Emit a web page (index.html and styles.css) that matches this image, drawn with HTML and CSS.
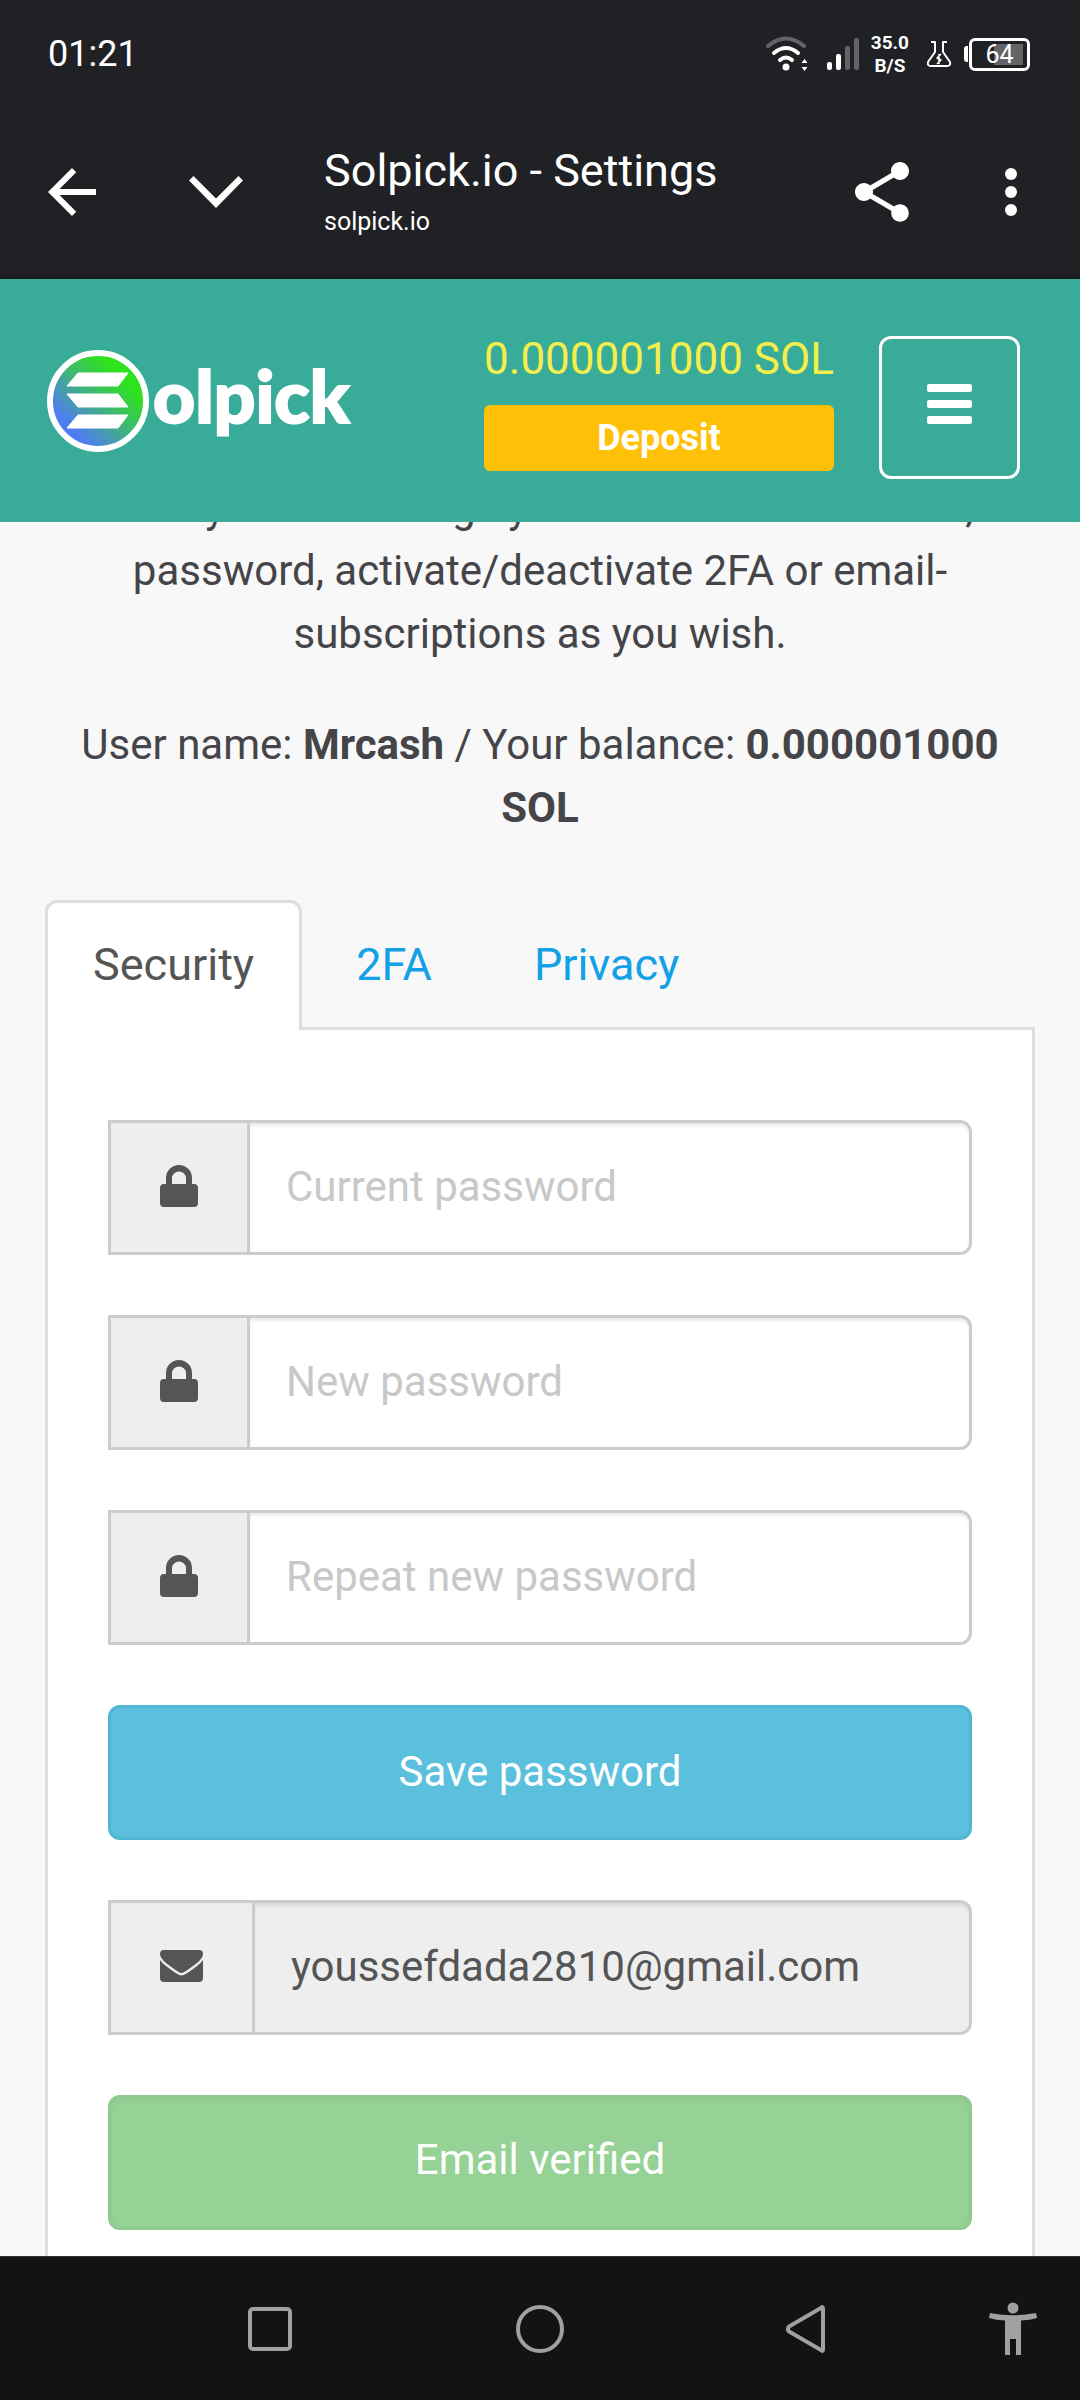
FILE: index.html
```html
<!DOCTYPE html>
<html lang="en">
<head>
<meta charset="utf-8">
<meta name="viewport" content="width=device-width, initial-scale=1">
<title>Solpick.io - Settings</title>
<link rel="stylesheet" href="styles.css">
</head>
<body>
<div class="status-bar">
  <span class="clock">01:21</span>
  <div class="status-icons">
    <svg class="wifi" width="44" height="36" viewBox="0 0 44 36" fill="none" stroke-linecap="round">
      <path d="M3 10Q21 -5 39 10" stroke="#636466" stroke-width="4"/>
      <path d="M9 17Q21 7 33 17" stroke="#fff" stroke-width="4"/>
      <path d="M15 24Q21 19 27 24" stroke="#fff" stroke-width="4"/>
      <circle cx="21" cy="31" r="3.5" fill="#fff"/>
      <path d="M36.500 27l3-4 3 4zM36.500 31l3 4 3-4z" fill="#fff"/>
    </svg>
    <svg class="signal" width="32" height="32" viewBox="0 0 32 32">
      <rect x="0" y="24" width="5" height="8" rx="2" fill="#fff"/>
      <rect x="9" y="16" width="5" height="16" rx="2" fill="#fff"/>
      <rect x="18" y="8" width="5" height="24" rx="2" fill="#636466"/>
      <rect x="27" y="0" width="5" height="32" rx="2" fill="#636466"/>
    </svg>
    <div class="speed"><span>35.0</span><span>B/S</span></div>
    <svg class="flask" width="26" height="28" viewBox="0 0 26 28" fill="none" stroke="#fff" stroke-width="2" stroke-linejoin="round">
      <path d="M5 2h4v10L2 22q-1 4 3 4h16q4 0 3-4L17 12V2h4"/>
      <path d="M15 14l-4 4 4 2-4 4M13 14v10" stroke-width="1.500"/>
    </svg>
    <div class="battery"><span class="battery-tip"></span><span class="battery-body">64</span></div>
  </div>
</div>

<div class="toolbar">
  <button class="tool" aria-label="Back"><svg width="72" height="72" viewBox="0 0 24 24"><path d="M20 11H7.830l5.590-5.590L12 4l-8 8 8 8 1.410-1.410L7.830 13H20z"/></svg></button>
  <button class="tool" aria-label="Minimise"><svg width="72" height="72" viewBox="0 0 72 72"><path d="M9 24.500L13.500 20 36 42.500 58.500 20 63 24.500 36 52z"/></svg></button>
  <div class="page-id">
    <span class="page-title">Solpick.io - Settings</span>
    <span class="page-host">solpick.io</span>
  </div>
  <button class="tool" aria-label="Share"><svg width="72" height="72" viewBox="0 0 24 24"><path d="M18 16.080c-.76 0-1.440.3-1.960.77L8.910 12.700c.05-.23.09-.46.09-.7s-.04-.47-.09-.7l7.050-4.110c.54.5 1.250.81 2.040.81 1.660 0 3-1.340 3-3s-1.340-3-3-3-3 1.340-3 3c0 .24.04.47.09.7L8.040 9.810C7.500 9.310 6.790 9 6 9c-1.660 0-3 1.340-3 3s1.340 3 3 3c.79 0 1.500-.31 2.040-.81l7.120 4.160c-.05.21-.08.43-.08.65 0 1.610 1.310 2.920 2.920 2.920s2.920-1.310 2.920-2.920-1.310-2.920-2.920-2.920z"/></svg></button>
  <button class="tool" aria-label="More"><svg width="72" height="72" viewBox="0 0 24 24"><circle cx="12" cy="6" r="2"/><circle cx="12" cy="12" r="2"/><circle cx="12" cy="18" r="2"/></svg></button>
</div>

<header class="site-header">
  <a class="logo" href="#" aria-label="Solpick">
    <svg width="102" height="102" viewBox="0 0 102 102">
      <defs><linearGradient id="coin" x1="0.150" y1="0.850" x2="0.850" y2="0.150">
        <stop offset="0.100" stop-color="#4f7cf0"/><stop offset="0.500" stop-color="#3fb578"/><stop offset="0.850" stop-color="#2fe31c"/>
      </linearGradient></defs>
      <circle cx="51" cy="51" r="48" fill="url(#coin)" stroke="#fff" stroke-width="6"/>
      <g fill="#fff" stroke="#fff" stroke-width="1" stroke-linejoin="round">
        <path d="M31 23h50l-10 13H20z"/><path d="M20 44h51l10 13H31z"/><path d="M31 65h50l-10 13H20z"/>
      </g>
    </svg>
    <span class="wordmark">olpick</span>
  </a>
  <div class="wallet">
    <span class="wallet-balance">0.000001000 SOL</span>
    <button class="deposit">Deposit</button>
  </div>
  <button class="menu" aria-label="Menu"><span></span><span></span><span></span></button>
</header>

<main class="content">
  <p class="intro">Here you can change your user e-mail address, password, activate/deactivate 2FA or email-subscriptions as you wish.</p>
  <p class="intro">User name: <b>Mrcash</b> / Your balance: <b>0.000001000 SOL</b></p>

  <nav class="tabs">
    <a class="tab active" href="#security">Security</a>
    <a class="tab" href="#2fa">2FA</a>
    <a class="tab" href="#privacy">Privacy</a>
  </nav>

  <form class="panel" id="security">
    <div class="field">
      <label class="addon" for="current" aria-label="Current password"><svg width="40" height="42" viewBox="0 0 40 42"><path d="M7 19v-6a13 13 0 0 1 26 0v6h2q4 0 4 4v15q0 4-4 4H5q-4 0-4-4V23q0-4 4-4zM13 19h14v-6a7 6.500 0 0 0-14 0z"/></svg></label>
      <input id="current" type="password" placeholder="Current password">
    </div>
    <div class="field">
      <label class="addon" for="new" aria-label="New password"><svg width="40" height="42" viewBox="0 0 40 42"><path d="M7 19v-6a13 13 0 0 1 26 0v6h2q4 0 4 4v15q0 4-4 4H5q-4 0-4-4V23q0-4 4-4zM13 19h14v-6a7 6.500 0 0 0-14 0z"/></svg></label>
      <input id="new" type="password" placeholder="New password">
    </div>
    <div class="field">
      <label class="addon" for="repeat" aria-label="Repeat new password"><svg width="40" height="42" viewBox="0 0 40 42"><path d="M7 19v-6a13 13 0 0 1 26 0v6h2q4 0 4 4v15q0 4-4 4H5q-4 0-4-4V23q0-4 4-4zM13 19h14v-6a7 6.500 0 0 0-14 0z"/></svg></label>
      <input id="repeat" type="password" placeholder="Repeat new password">
    </div>
    <button class="btn btn-save" type="button">Save password</button>
    <div class="field">
      <label class="addon" for="email" aria-label="Email"><svg width="45" height="34" viewBox="0 0 45 34"><path d="M1 5q0-4 4-4h35q4 0 4 4 0 4-6 9-13 10-15.500 10T7 14Q1 9 1 5zM1 11q2 3 6 6 12 9.500 15.500 9.500T38 17q4-3 6-6v18q0 4-4 4H5q-4 0-4-4z"/></svg></label>
      <input id="email" type="email" value="youssefdada2810@gmail.com" disabled>
    </div>
    <button class="btn btn-verified" type="button" disabled>Email verified</button>
  </form>
</main>

<div class="nav-bar">
  <button class="nav-key nav-recent" aria-label="Recent apps"><svg width="48" height="52" viewBox="0 0 48 52"><rect x="4" y="6" width="40" height="40" rx="3"/></svg></button>
  <button class="nav-key" aria-label="Home"><svg width="48" height="52" viewBox="0 0 48 52"><circle cx="24" cy="26" r="22"/></svg></button>
  <button class="nav-key" aria-label="Back"><svg width="48" height="52" viewBox="0 0 48 52"><path d="M37 5.500v41Q37 49 35 47L3 28.500Q1 26 3 23.500L35 5Q37 3 37 5.500z"/></svg></button>
  <button class="nav-key nav-access" aria-label="Accessibility"><svg width="48" height="54" viewBox="0 0 48 54"><circle cx="24" cy="6" r="5.500"/><path d="M1 11q23 4.500 46 0l1 5q-7 2-16 2.500V53h-5V37h-6v16h-5V18.500Q7 18 0 16z"/></svg></button>
</div>
</body>
</html>
```
FILE: styles.css
```css
* { box-sizing: border-box; }

body {
  margin: 0;
  height: 100vh;
  display: flex;
  flex-direction: column;
  overflow: hidden;
  background: #f8f8f8;
  color: #454549;
  font-family: Roboto, "Liberation Sans", sans-serif;
  font-size: 42px;
  line-height: 63px;
}

button, input { font: inherit; }
button { border: 0; padding: 0; background: none; }
a { text-decoration: none; }
svg { display: block; }

/* Phone status bar */
.status-bar {
  flex: none;
  display: flex;
  align-items: center;
  justify-content: space-between;
  height: 108px;
  padding: 0 50px 0 48px;
  background: #202124;
  color: #fff;
}
.clock { font-size: 36px; line-height: 42px; }
.status-icons { display: flex; align-items: center; }
.signal { margin-left: 18px; }
.speed {
  display: flex;
  flex-direction: column;
  margin-left: 12px;
  font-size: 19px;
  font-weight: 700;
  line-height: 23px;
  text-align: center;
}
.flask { margin-left: 17px; }
.battery { display: flex; align-items: center; margin-left: 12px; }
.battery-tip { width: 4px; height: 16px; border-radius: 3px 0 0 3px; background: #fff; }
.battery-body {
  width: 61px;
  height: 33px;
  margin-left: 1px;
  border: 3px solid #fff;
  border-radius: 6px;
  background: linear-gradient(#636466, #636466) 22px 3px / 29px 21px no-repeat;
  font-size: 25px;
  line-height: 27px;
  text-align: center;
}

/* Browser toolbar */
.toolbar {
  flex: none;
  display: flex;
  align-items: center;
  height: 171px;
  padding: 0 33px 0 36px;
  border-bottom: 3px solid #17201f;
  background: #202124;
  color: #fff;
}
.tool { width: 72px; height: 72px; }
.tool svg { fill: #fff; }
.tool + .tool { margin-left: 72px; }
.page-id + .tool + .tool { margin-left: 57px; }
.page-id { flex: 1; display: flex; flex-direction: column; margin-left: 72px; }
.page-title { font-size: 45px; line-height: 60px; }
.page-host { font-size: 25px; line-height: 42px; }

/* Site header */
.site-header {
  flex: none;
  position: relative;
  z-index: 1;
  display: flex;
  align-items: flex-start;
  padding: 57px 60px 43px 47px;
  background: #38ac98;
  color: #fff;
}
.logo { display: flex; align-items: center; height: 130px; color: #fff; }
.wordmark {
  margin-left: 4px;
  padding-bottom: 12px;
  font-family: Lato, "Liberation Sans", sans-serif;
  font-size: 73px;
  font-weight: 900;
  line-height: 84px;
  -webkit-text-stroke: 2px #fff;
}
.wallet { display: flex; flex-direction: column; gap: 23px; width: 350px; margin-left: auto; }
.wallet-balance {
  color: #f3ee4c;
  font-size: 44px;
  line-height: 46px;
  text-align: center;
  white-space: nowrap;
}
.deposit {
  height: 66px;
  border-radius: 6px;
  background: #ffc107;
  color: #fff;
  font-size: 36px;
  font-weight: 700;
  line-height: 66px;
}
.menu {
  display: flex;
  flex-direction: column;
  align-items: center;
  justify-content: center;
  gap: 8px;
  width: 141px;
  height: 143px;
  margin-left: 45px;
  padding-bottom: 8px;
  border: 3px solid #fff;
  border-radius: 12px;
}
.menu span { width: 45px; height: 8px; border-radius: 2px; background: #fff; }

/* Settings page, scrolled so that its first line is behind the header */
.content {
  flex: 1;
  min-height: 0;
  margin-top: -46px;
  padding: 0 45px;
  overflow: hidden;
}
.intro { margin: 0 0 48px; padding: 0 30px; text-align: center; }

.tabs {
  display: flex;
  gap: 6px;
  margin-top: 61px;
  border-bottom: 3px solid #ddd;
  font-size: 45px;
  line-height: 64px;
}
.tab {
  margin-bottom: -3px;
  padding: 30px 45px 33px;
  border: 3px solid transparent;
  border-bottom: 0;
  border-radius: 12px 12px 0 0;
  color: #12a1e6;
}
.tab.active { border-color: #ddd; background: #fff; color: #555; }

.panel {
  display: flex;
  flex-direction: column;
  gap: 60px;
  padding: 90px 60px;
  border: 3px solid #ddd;
  border-top: 0;
  background: #fff;
}
.field { display: flex; height: 135px; }
.addon {
  display: flex;
  align-items: center;
  padding: 0 48px 3px;
  border: 3px solid #ccc;
  border-right: 0;
  background: #eee;
}
.addon svg { fill: #555; }
.field input {
  flex: 1;
  min-width: 0;
  padding: 0 36px 3px;
  border: 3px solid #ccc;
  border-radius: 0 12px 12px 0;
  outline: 0;
  background: #fff;
  box-shadow: inset 0 3px 3px rgba(0, 0, 0, 0.075);
  color: #555;
}
.field input::placeholder { color: #c8c8c8; opacity: 1; }
.field input:disabled { background: #eee; color: #555; }

.btn { height: 135px; padding-bottom: 3px; border: 3px solid; border-radius: 12px; color: #fff; }
.btn-save { border-color: #4fb5d3; background: #5bc0de; }
.btn-verified {
  padding-bottom: 6px;
  border-color: #8ec98e;
  background: #96d296;
  box-shadow: inset 0 3px 6px rgba(0, 0, 0, 0.04);
}

/* Phone navigation keys */
.nav-bar {
  flex: none;
  display: grid;
  grid-template-columns: 1fr 2fr 2fr 2fr 1fr;
  height: 144px;
  border-top: 1px solid #333;
  background: #131313;
}
.nav-key { display: flex; align-items: center; justify-content: center; }
.nav-recent { grid-column: 2; }
.nav-key svg { fill: none; stroke: #a0a0a0; stroke-width: 4; }
.nav-key.nav-access svg { fill: #a0a0a0; stroke: none; }
```
